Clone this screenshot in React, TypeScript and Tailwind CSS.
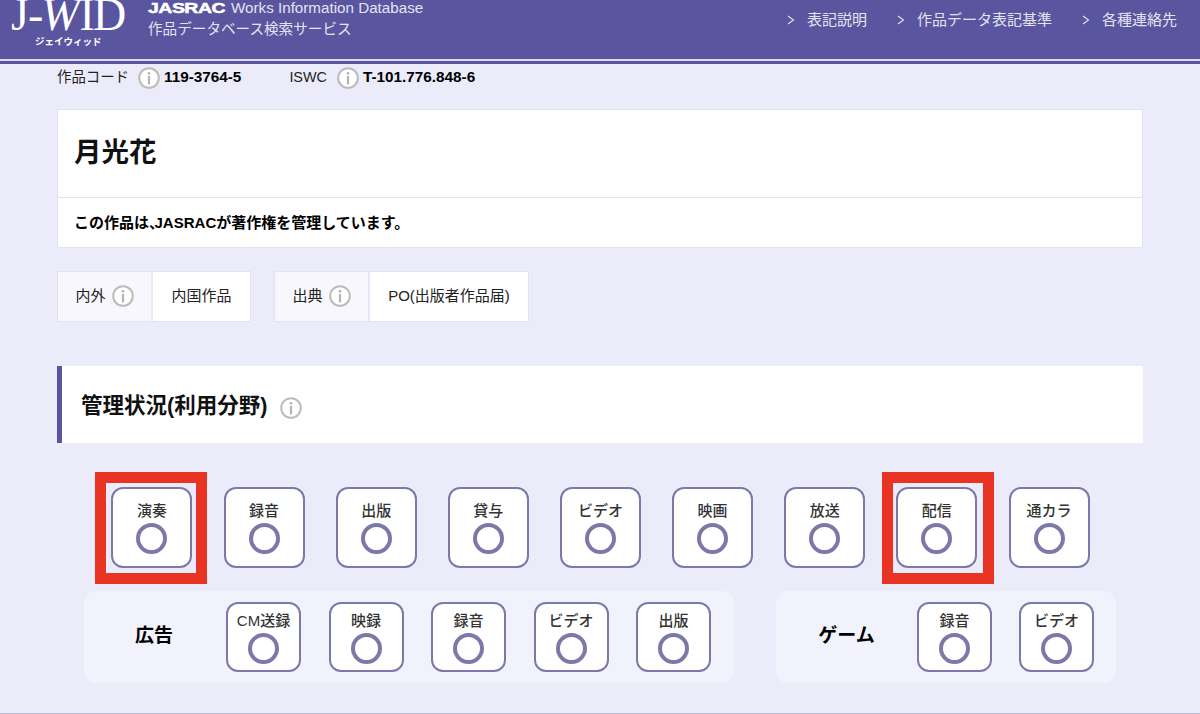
import React from "react";

const ROW_ONE = ["演奏", "録音", "出版", "貸与", "ビデオ", "映画", "放送", "配信", "通カラ"];
const AD_ROW = ["CM送録", "映録", "録音", "ビデオ", "出版"];
const GAME_ROW = ["録音", "ビデオ"];

function InfoIcon({ size = 22 }: { size?: number }) {
    return (
        <svg width={size} height={size} viewBox="0 0 22 22" className="shrink-0">
            <circle cx="11" cy="11" r="9.8" fill="#fff" stroke="#bcbcbc" strokeWidth="2" />
            <circle cx="11" cy="6.3" r="1.4" fill="#b4b4b4" />
            <rect x="9.9" y="9" width="2.2" height="8.4" fill="#b4b4b4" />
        </svg>
    );
}

function NavLink({ label }: { label: string }) {
    return (
        <div className="flex items-center gap-[12px]">
            <svg width="8" height="10" viewBox="0 0 8 10" fill="none" stroke="#e4e3f2" strokeWidth="1.1">
                <path d="M1 1l5.5 4L1 9" />
            </svg>
            <span className="text-[15px] leading-[20px] text-[#e4e3f2]">{label}</span>
        </div>
    );
}

function UseTile({ label, wide }: { label: string; wide?: boolean }) {
    return (
        <div
            className={
                wide
                    ? "flex h-[81px] w-[81px] shrink-0 flex-col items-center rounded-[12px] border-2 border-[#7c78a8] bg-white pt-[12px]"
                    : "flex h-[70px] w-[75px] shrink-0 flex-col items-center rounded-[12px] border-2 border-[#7c78a8] bg-white pt-[7px]"
            }
        >
            <span className="whitespace-nowrap text-[15px] leading-[20px] font-medium text-[#333]">{label}</span>
            <span className="mt-[2px] h-[31px] w-[31px] rounded-full border-[4px] border-[#7c78a8]" />
        </div>
    );
}

function InfoBox({ label, value, valueWidth }: { label: string; value: string; valueWidth: string }) {
    return (
        <div className="flex h-[51px] border border-[#e2e2f3] bg-white text-[15px] text-[#222]">
            <div className="flex w-[95px] items-center justify-center gap-[6px] border-r-2 border-[#e8e8f6] bg-[#f7f7fd]">
                <span>{label}</span>
                <InfoIcon />
            </div>
            <div className={`flex items-center justify-center ${valueWidth}`}>{value}</div>
        </div>
    );
}

export default function App() {
    return (
        <div className="h-[714px] w-[1200px] overflow-hidden border-b border-[#c2c2da] bg-[#ebebf9] font-['Liberation_Sans','Noto_Sans_CJK_JP',sans-serif]">
            {/* Header */}
            <header className="border-b-[3.5px] border-[#5a559f] bg-[#5a559f]">
                <div className="flex h-[59px] justify-between pr-[23px]">
                    <div className="flex">
                        <div className="w-[148px] overflow-hidden pl-[11px] text-white">
                            <div className="-mt-[6px] flex h-[42px] whitespace-nowrap font-['Liberation_Serif',serif] text-[46px] leading-[42px]">
                                <span className="tracking-[-1px]">J-</span>
                                <i className="-ml-[1px] tracking-[-2px]">W</i>
                                <span className="ml-[2px] tracking-[-2px]">ID</span>
                            </div>
                            <div className="pl-[24px] text-[9.5px] leading-[12px] font-bold whitespace-nowrap">ジェイウィッド</div>
                        </div>
                        <div className="text-[#e4e3f2]">
                            <div className="-mt-[2px] flex items-center gap-[5px] text-[15.2px] leading-[20px]">
                                <span className="w-[78px] origin-left scale-x-[1.3] text-[15px] font-bold tracking-[-0.4px] text-white [-webkit-text-stroke:0.5px_white]">JASRAC</span>
                                <span>Works Information Database</span>
                            </div>
                            <div className="mt-[1px] text-[14.6px] leading-[20px]">作品データベース検索サービス</div>
                        </div>
                    </div>
                    <nav className="flex items-start gap-[30px] pt-[10px]">
                        <NavLink label="表記説明" />
                        <NavLink label="作品データ表記基準" />
                        <NavLink label="各種連絡先" />
                    </nav>
                </div>
                <div className="h-[1.5px] bg-[#dcdbef]" />
            </header>

            <main className="px-[57px]">
                {/* Codes */}
                <div className="flex h-[28px] items-center text-[14.4px] text-[#222]">
                    <span>作品コード</span>
                    <span className="ml-[9px]"><InfoIcon /></span>
                    <span className="ml-[4px] text-[15.3px] font-bold text-black">119-3764-5</span>
                    <span className="ml-[48px]">ISWC</span>
                    <span className="ml-[10px]"><InfoIcon /></span>
                    <span className="ml-[4px] text-[15.3px] font-bold text-black">T-101.776.848-6</span>
                </div>

                {/* Title */}
                <section className="mt-[17px] border border-[#e2e2f3] bg-white">
                    <h1 className="flex h-[87px] items-center pl-[16px] text-[27.5px] font-bold text-[#111]">月光花</h1>
                    <p className="h-[50px] border-t border-[#e2e2f3] pl-[16px] text-[15px] leading-[50px] font-bold text-black">
                        この作品は<span className="-mr-[2px] [font-feature-settings:'halt']">、</span>JASRACが著作権を管理しています。
                    </p>
                </section>

                <div className="mt-[23px] flex gap-[23px]">
                    <InfoBox label="内外" value="内国作品" valueWidth="w-[97px]" />
                    <InfoBox label="出典" value="PO(出版者作品届)" valueWidth="w-[158px]" />
                </div>

                {/* Section heading */}
                <div className="mt-[44px] flex h-[77px] items-center gap-[13px] border-l-[5px] border-[#5a559f] bg-white pt-[4px] pl-[19px]">
                    <h2 className="text-[21.5px] font-bold text-[#111]">管理状況(利用分野)</h2>
                    <span className="mt-[3px]"><InfoIcon /></span>
                </div>

                {/* Use tiles */}
                <div className="mt-[44px] flex gap-[31.15px] pl-[54.4px]">
                    {ROW_ONE.map((label) => (
                        <div key={label} className="relative">
                            <UseTile label={label} wide />
                            {label === "演奏" && (
                                <div className="absolute -top-[15px] -left-[16.4px] h-[112px] w-[112px] border-[11px] border-[#e93323]" />
                            )}
                            {label === "配信" && (
                                <div className="absolute -top-[15px] -left-[14px] h-[112px] w-[112px] border-[11px] border-[#e93323]" />
                            )}
                        </div>
                    ))}
                </div>

                <div className="mt-[23px] ml-[27px] flex gap-[42px]">
                    <div className="flex h-[92px] w-[650px] items-center rounded-[12px] bg-[#f2f2fd]">
                        <span className="w-[142px] pr-[2px] text-center text-[19px] font-bold text-black">広告</span>
                        <div className="flex gap-[27.5px]">
                            {AD_ROW.map((label) => (
                                <UseTile key={label} label={label} />
                            ))}
                        </div>
                    </div>
                    <div className="flex h-[92px] w-[340px] items-center rounded-[12px] bg-[#f2f2fd]">
                        <span className="w-[141px] text-center text-[19px] font-bold text-black">ゲーム</span>
                        <div className="flex gap-[27px]">
                            {GAME_ROW.map((label) => (
                                <UseTile key={label} label={label} />
                            ))}
                        </div>
                    </div>
                </div>
            </main>
        </div>
    );
}
